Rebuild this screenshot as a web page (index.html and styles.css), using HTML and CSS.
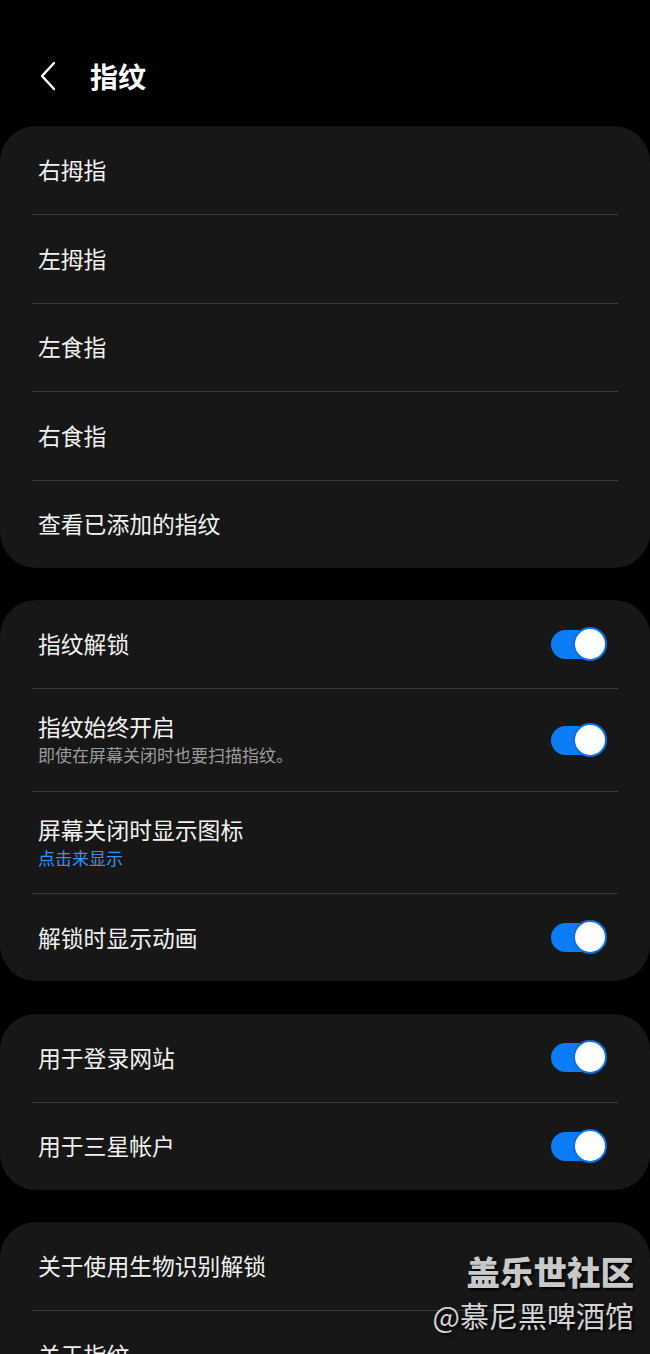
FILE: index.html
```html
<!DOCTYPE html>
<html lang="zh">
<head>
<meta charset="utf-8">
<link rel="stylesheet" href="styles.css">
</head>
<body>
<div class="screen">
  <header class="topbar">
    <svg class="back" width="20" height="32" viewBox="0 0 20 32"><path d="M16 3 L4 16 L16 29" fill="none" stroke="#fff" stroke-width="2.4" stroke-linecap="round" stroke-linejoin="round"/></svg>
    <h1 class="title">指纹</h1>
  </header>

  <section class="card fingers">
    <div class="row"><span class="label">右拇指</span></div>
    <div class="row"><span class="label">左拇指</span></div>
    <div class="row"><span class="label">左食指</span></div>
    <div class="row"><span class="label">右食指</span></div>
    <div class="row"><span class="label">查看已添加的指纹</span></div>
  </section>

  <section class="card">
    <div class="row"><span class="label">指纹解锁</span><span class="toggle"></span></div>
    <div class="row tall"><div class="texts"><span class="label">指纹始终开启</span><span class="sub">即使在屏幕关闭时也要扫描指纹。</span></div><span class="toggle"></span></div>
    <div class="row tall"><div class="texts"><span class="label">屏幕关闭时显示图标</span><span class="sub link">点击来显示</span></div></div>
    <div class="row"><span class="label">解锁时显示动画</span><span class="toggle"></span></div>
  </section>

  <section class="card">
    <div class="row"><span class="label">用于登录网站</span><span class="toggle"></span></div>
    <div class="row"><span class="label">用于三星帐户</span><span class="toggle"></span></div>
  </section>

  <section class="card">
    <div class="row"><span class="label">关于使用生物识别解锁</span></div>
    <div class="row"><span class="label">关于指纹</span></div>
  </section>

  <div class="watermark">
    <div class="wm1">盖乐世社区</div>
    <div class="wm2">@慕尼黑啤酒馆</div>
  </div>
</div>
</body>
</html>
```

FILE: styles.css
```css
html, body {
  margin: 0;
  padding: 0;
  background: #000;
}
body {
  width: 650px;
  height: 1354px;
  overflow: hidden;
  font-family: "Noto Sans CJK SC", "Noto Sans", sans-serif;
  color: #f2f2f2;
}
.screen {
  position: relative;
  height: 1354px;
  display: flex;
  flex-direction: column;
  gap: 32.5px;
}
.topbar {
  flex-shrink: 0;
  height: 94px;
  display: flex;
  align-items: center;
  padding-left: 38px;
  padding-top: 58px;
  gap: 32px;
  margin-bottom: -0.5px;
  box-sizing: border-box;
}
.title {
  margin: 0;
  font-size: 28px;
  line-height: 36px;
  font-weight: 700;
  color: #fff;
}
.card {
  background: #171717;
  border-radius: 36px;
  padding: 0 32px;
  flex-shrink: 0;
}
.row {
  height: 88px;
  display: flex;
  align-items: center;
  justify-content: space-between;
  padding: 0 6px;
  border-top: 1px solid #3a3a3a;
  box-sizing: border-box;
}
.fingers .row { height: 88.4px; }
.row:first-child { border-top: none; }
.row.tall { height: 102.5px; }
.label {
  font-size: 22.8px;
  line-height: 30px;
  color: #f2f2f2;
}
.texts {
  display: flex;
  flex-direction: column;
}
.sub {
  font-size: 17px;
  line-height: 26px;
  color: #9b9b9b;
}
.sub.link { color: #3d8ef0; }
.toggle {
  position: relative;
  width: 47px;
  height: 29px;
  border-radius: 15px;
  background: #0a7cf5;
  margin-right: 14px;
}
.toggle::after {
  content: "";
  position: absolute;
  right: -9px;
  top: -3px;
  width: 30px;
  height: 30px;
  border-radius: 50%;
  background: #fff;
  border: 2px solid #0a6fe0;
}
.watermark {
  position: absolute;
  right: 16px;
  top: 1248px;
  text-align: right;
  text-shadow: 2px 2px 3px #000;
}
.wm1 {
  font-size: 33.5px;
  font-weight: 900;
  line-height: 46px;
  color: #c9c9c9;
}
.wm2 {
  font-size: 29px;
  line-height: 42px;
  color: #d4d4d4;
}
```
